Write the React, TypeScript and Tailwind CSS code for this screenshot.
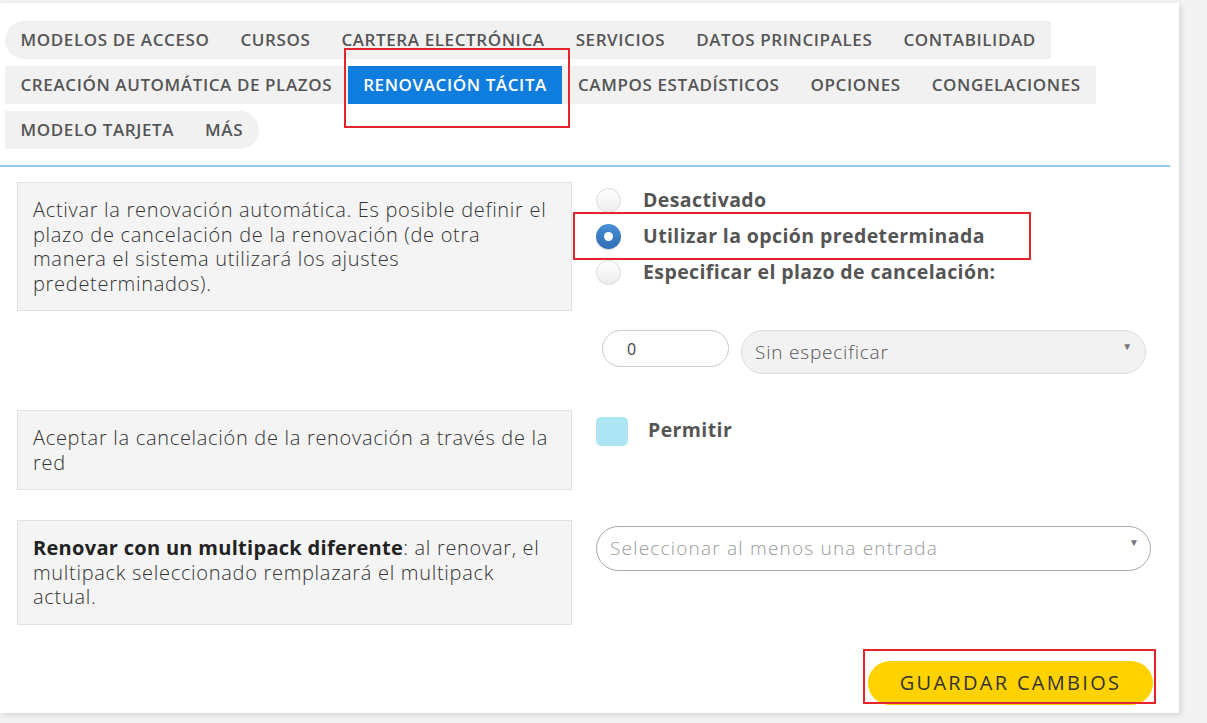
import React from "react";

const font = { fontFamily: "'Open Sans', Lato, sans-serif" };

function Tab({ label, active }: { label: string; active?: boolean }) {
  return (
    <div
      className={
        "h-[38px] flex items-center px-[15.5px] text-[17px] font-semibold whitespace-nowrap tracking-[0.6px] " +
        (active ? "bg-[#0f7ddd] text-white" : "text-[#555555]")
      }
    >
      {label}
    </div>
  );
}

function Radio({ checked }: { checked?: boolean }) {
  if (checked) {
    return (
      <div className="w-[25px] h-[25px] rounded-full bg-gradient-to-b from-[#4b8fd6] to-[#2d6db5] flex items-center justify-center shadow-[0_1px_1px_rgba(0,0,0,0.2)]">
        <div className="w-[9px] h-[9px] rounded-full bg-white" />
      </div>
    );
  }
  return (
    <div className="w-[25px] h-[25px] rounded-full border border-[#dcdcdc] bg-gradient-to-b from-white to-[#ececec]" />
  );
}

function RadioRow({ checked, label }: { checked?: boolean; label: string }) {
  return (
    <div className="h-[36px] flex items-center gap-[22px]">
      <Radio checked={checked} />
      <span className="text-[19.5px] font-bold text-[#555555] leading-[26px] tracking-[0.4px]">{label}</span>
    </div>
  );
}

const descCls =
  "w-[555px] bg-[#f4f4f4] border border-[#e2e2e2] pl-[15px] pt-[15px] pr-[4px] text-[20px] leading-[24.5px] font-light text-[#333333] tracking-[0.7px] whitespace-nowrap";

export default function App() {
  return (
    <div className="min-h-screen bg-[#f3f3f3] pt-[3px] relative" style={font}>
      <div className="w-[1179px] h-[710px] bg-white shadow-[2px_2px_6px_rgba(0,0,0,0.12)] relative">
        {/* Tabs */}
        <div className="pt-[18px] pl-[5px] flex flex-col gap-[7px]">
          <div className="flex self-start bg-[#f1f1f1] rounded-l-full">
            <Tab label="MODELOS DE ACCESO" />
            <Tab label="CURSOS" />
            <Tab label="CARTERA ELECTRÓNICA" />
            <Tab label="SERVICIOS" />
            <Tab label="DATOS PRINCIPALES" />
            <Tab label="CONTABILIDAD" />
          </div>
          <div className="flex self-start bg-[#f1f1f1]">
            <Tab label="CREACIÓN AUTOMÁTICA DE PLAZOS" />
            <Tab label="RENOVACIÓN TÁCITA" active />
            <Tab label="CAMPOS ESTADÍSTICOS" />
            <Tab label="OPCIONES" />
            <Tab label="CONGELACIONES" />
          </div>
          <div className="flex self-start bg-[#f1f1f1] rounded-r-full">
            <Tab label="MODELO TARJETA" />
            <Tab label="MÁS" />
          </div>
        </div>
        <div className="mt-[16px] w-[1170px] h-[2px] bg-[#95c6ee]" />

        {/* Content */}
        <div className="pl-[17px] pt-[15px] flex flex-col">
          {/* Row 1 */}
          <div className="flex gap-[24px]">
            <div className={descCls + " h-[129px]"}>
              Activar la renovación automática. Es posible definir el
              <br />
              plazo de cancelación de la renovación (de otra
              <br />
              manera el sistema utilizará los ajustes
              <br />
              predeterminados).
            </div>
            <div className="flex flex-col">
              <div className="flex flex-col">
                <RadioRow label="Desactivado" />
                <RadioRow label="Utilizar la opción predeterminada" checked />
                <RadioRow label="Especificar el plazo de cancelación:" />
              </div>
              <div className="flex items-start gap-[12px] mt-[40px] ml-[6px]">
                <div className="w-[127px] h-[37px] rounded-full border border-[#cccccc] flex items-center pl-[24px] text-[16px] text-[#444444]">
                  0
                </div>
                <div className="w-[405px] h-[44px] rounded-full border border-[#dddddd] bg-[#f2f2f2] flex items-center justify-between pl-[13px] pr-[12px] text-[19px] text-[#555555] font-light tracking-[0.8px]">
                  <span>Sin especificar</span>
                  <span className="text-[10px] text-[#777777] -mt-[12px]">▼</span>
                </div>
              </div>
            </div>
          </div>

          {/* Row 2 */}
          <div className="flex gap-[24px] mt-[36px]">
            <div className={descCls + " h-[80px]"}>
              Aceptar la cancelación de la renovación a través de la
              <br />
              red
            </div>
            <div className="flex items-start gap-[20px] pt-[7px]">
              <div className="w-[32px] h-[29px] rounded-[5px] bg-[#aee5f5]" />
              <span className="text-[19.5px] font-bold text-[#555555] leading-[26px] tracking-[0.4px]">Permitir</span>
            </div>
          </div>

          {/* Row 3 */}
          <div className="flex gap-[24px] mt-[30px]">
            <div className={descCls + " h-[105px]"}>
              <span className="font-bold text-[#222222] tracking-[0.3px]">Renovar con un multipack diferente</span>: al renovar, el
              <br />
              multipack seleccionado remplazará el multipack
              <br />
              actual.
            </div>
            <div className="pt-[6px]">
              <div className="w-[555px] h-[45px] rounded-full border border-[#aaaaaa] bg-white flex items-center justify-between pl-[13px] pr-[10px] text-[19px] text-[#999999] font-light tracking-[1.2px]">
                <span>Seleccionar al menos una entrada</span>
                <span className="text-[10px] text-[#777777] -mt-[12px]">▼</span>
              </div>
            </div>
          </div>

          {/* Button */}
          <div className="flex justify-end w-[1136px] mt-[36px]">
            <button className="w-[285px] h-[44px] rounded-full bg-[#ffd200] text-[20px] font-medium tracking-[2.3px] text-[#333333]">
              GUARDAR CAMBIOS
            </button>
          </div>
        </div>

        {/* Red annotation boxes */}
        <div className="absolute left-[344px] top-[45px] w-[226px] h-[80px] border-2 border-[#e4262c] pointer-events-none" />
        <div className="absolute left-[573px] top-[209px] w-[458px] h-[48px] border-2 border-[#e4262c] pointer-events-none" />
        <div className="absolute left-[863px] top-[646px] w-[293px] h-[55px] border-2 border-[#e4262c] pointer-events-none" />
      </div>
    </div>
  );
}
